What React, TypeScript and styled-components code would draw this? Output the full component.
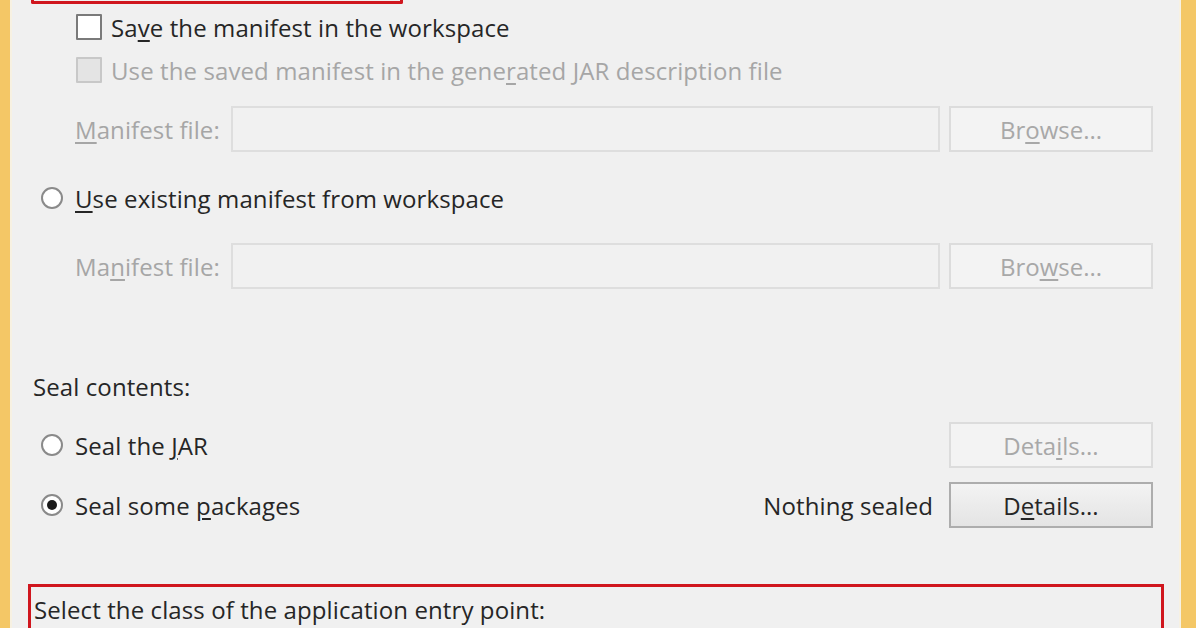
import React from 'react';
import styled, { createGlobalStyle } from 'styled-components';

const GlobalStyle = createGlobalStyle`
  html, body {
    margin: 0;
    padding: 0;
    background: #f0f0f0;
  }
  #root {
    height: 628px;
    overflow: hidden;
  }
`;

const Frame = styled.div`
  display: flex;
  height: 628px;
  width: 1196px;
  background: #f0f0f0;
  font-family: 'Open Sans', 'Noto Sans', sans-serif;
  font-size: 24px;
  color: #222;
`;

const FrameEdge = styled.div<{ $w: number; $side: 'left' | 'right' }>`
  width: ${p => p.$w}px;
  flex-shrink: 0;
  background: #f4c766;
  border-${p => (p.$side === 'left' ? 'right' : 'left')}: 2px solid #f7f1e2;
`;

const Panel = styled.div`
  flex: 1;
  display: flex;
  flex-direction: column;
  padding-right: 26px;
`;

const HighlightTail = styled.div`
  margin-left: 19px;
  width: 366px;
  height: 1px;
  border: 3px solid #d0161e;
  border-top: none;
  border-radius: 0 0 2px 2px;
`;

const Row = styled.div<{ $top: number; $indent: number; $h?: number }>`
  display: flex;
  align-items: center;
  height: ${p => p.$h ?? 40}px;
  margin-top: ${p => p.$top}px;
  padding-left: ${p => p.$indent}px;
`;

const Check = styled.span<{ $disabled?: boolean }>`
  width: 22px;
  height: 22px;
  flex-shrink: 0;
  margin-right: 9px;
  background: ${p => (p.$disabled ? '#e4e4e4' : '#fff')};
  border: 2px solid ${p => (p.$disabled ? '#c8c8c8' : '#7a7a7a')};
  border-radius: 1px;
`;

const Radio = styled.span<{ $checked?: boolean }>`
  position: relative;
  width: 22px;
  height: 22px;
  flex-shrink: 0;
  margin-right: 12px;
  border-radius: 50%;
  background: #fff;
  border: 2px solid #8a8a8a;
  box-sizing: border-box;

  &::after {
    content: '';
    display: ${p => (p.$checked ? 'block' : 'none')};
    position: absolute;
    left: 4px;
    top: 4px;
    width: 10px;
    height: 10px;
    border-radius: 50%;
    background: #1a1a1a;
  }
`;

const Label = styled.span<{ $disabled?: boolean }>`
  color: ${p => (p.$disabled ? '#a6a6a6' : '#262626')};
  white-space: nowrap;
  letter-spacing: 0.1px;
`;

const Key = styled.u`
  text-underline-offset: 3px;
`;

const FieldLabel = styled(Label)`
  width: 156px;
  flex-shrink: 0;
`;

const TextField = styled.div`
  flex: 1;
  align-self: stretch;
  background: #f1f1f1;
  border: 2px solid #dedede;
  margin-right: 9px;
`;

const Spacer = styled.div`
  flex: 1;
`;

const Button = styled.div<{ $disabled?: boolean }>`
  width: 204px;
  height: 100%;
  box-sizing: border-box;
  flex-shrink: 0;
  display: flex;
  align-items: center;
  justify-content: center;
  color: ${p => (p.$disabled ? '#a8a8a8' : '#262626')};
  background: ${p =>
    p.$disabled ? '#f3f3f3' : 'linear-gradient(#f3f3f3, #e4e4e4)'};
  border: 2px solid ${p => (p.$disabled ? '#dcdcdc' : '#adadad')};
`;

const Status = styled.span`
  margin-right: 16px;
  color: #262626;
  letter-spacing: 0.1px;
`;

const EntryBox = styled.div`
  margin-top: 56px;
  margin-left: 16px;
  margin-right: -11px;
  flex: 1;
  border: 3px solid #d0161e;
  border-bottom: none;
  padding: 6px 0 0 3px;
`;

export default function App() {
  return (
    <>
      <GlobalStyle />
      <Frame>
        <FrameEdge $w={10} $side="left" />
        <Panel>
          <HighlightTail />

          <Row $top={3} $indent={64}>
            <Check />
            <Label>
              Sa<Key>v</Key>e the manifest in the workspace
            </Label>
          </Row>
          <Row $top={3} $indent={64}>
            <Check $disabled />
            <Label $disabled>
              Use the saved manifest in the gene<Key>r</Key>ated JAR description file
            </Label>
          </Row>
          <Row $top={16} $indent={63} $h={46}>
            <FieldLabel $disabled>
              <Key>M</Key>anifest file:
            </FieldLabel>
            <TextField />
            <Button $disabled>
              Br<Key>o</Key>wse...
            </Button>
          </Row>

          <Row $top={26} $indent={29}>
            <Radio />
            <Label>
              <Key>U</Key>se existing manifest from workspace
            </Label>
          </Row>
          <Row $top={25} $indent={63} $h={46}>
            <FieldLabel $disabled>
              Ma<Key>n</Key>ifest file:
            </FieldLabel>
            <TextField />
            <Button $disabled>
              Bro<Key>w</Key>se...
            </Button>
          </Row>

          <Row $top={77} $indent={21}>
            <Label>Seal contents:</Label>
          </Row>
          <Row $top={16} $indent={29} $h={46}>
            <Radio />
            <Label>
              Seal the <Key>J</Key>AR
            </Label>
            <Spacer />
            <Button $disabled>
              Deta<Key>i</Key>ls...
            </Button>
          </Row>
          <Row $top={14} $indent={29} $h={46}>
            <Radio $checked />
            <Label>
              Seal some <Key>p</Key>ackages
            </Label>
            <Spacer />
            <Status>Nothing sealed</Status>
            <Button>
              D<Key>e</Key>tails...
            </Button>
          </Row>

          <EntryBox>
            <Label>Select the class of the application entry point:</Label>
          </EntryBox>
        </Panel>
        <FrameEdge $w={15} $side="right" />
      </Frame>
    </>
  );
}
